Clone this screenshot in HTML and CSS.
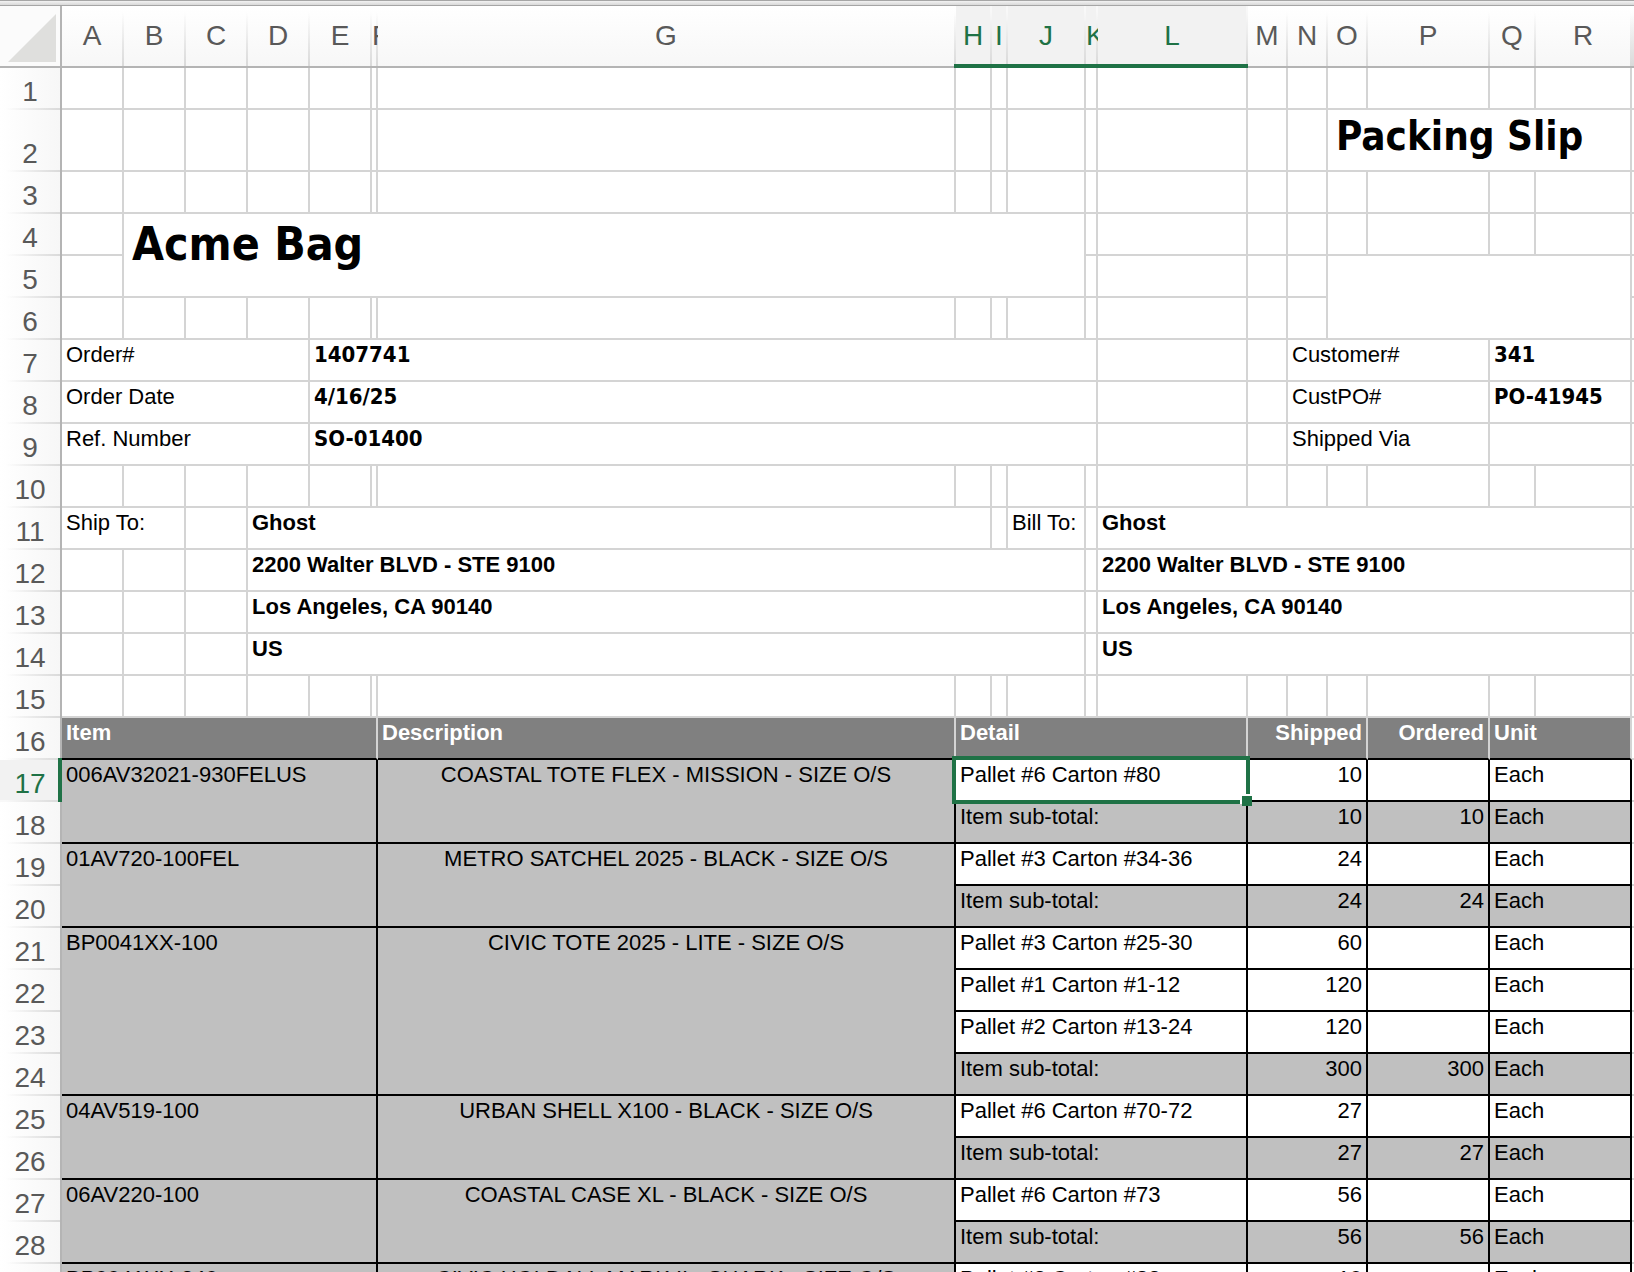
FILE: index.html
```html
<!DOCTYPE html>
<html lang="en">
<head>
    <meta charset="UTF-8">
    <meta name="viewport" content="width=device-width, initial-scale=1.0">
    <title>Packing Slip</title>
    <link rel="stylesheet" href="styles.css">
</head>
<body>
    <div class="sheet">
        <div class="top-edge"></div>
        <table>
            <colgroup>
                <col class="w-head">
                <col class="w-std" span="5">
                <col class="w-f">
                <col class="w-g">
                <col class="w-h">
                <col class="w-i">
                <col class="w-j">
                <col class="w-k">
                <col class="w-l">
                <col class="w-mno" span="3">
                <col class="w-p">
                <col class="w-q">
                <col class="w-r">
                <col class="w-s">
            </colgroup>
            <thead>
                <tr>
                    <th class="corner"><svg width="60" height="60" viewBox="0 0 60 60" aria-hidden="true"><path d="M56 8V56H8Z" fill="#dfdfdd"/></svg></th>
                    <th>A</th><th>B</th><th>C</th><th>D</th><th>E</th><th class="narrow">F</th><th class="before-active">G</th>
                    <th class="active">H</th><th class="active">I</th><th class="active">J</th><th class="active narrow">K</th><th class="active">L</th>
                    <th>M</th><th>N</th><th>O</th><th>P</th><th>Q</th><th>R</th><th></th>
                </tr>
            </thead>
            <tbody>
                <tr><th>1</th><td></td><td></td><td></td><td></td><td></td><td></td><td></td><td></td><td></td><td></td><td></td><td></td><td></td><td></td><td></td><td></td><td></td><td></td><td></td></tr>
                <tr class="tall"><th>2</th><td></td><td></td><td></td><td></td><td></td><td></td><td></td><td></td><td></td><td></td><td></td><td></td><td></td><td></td><td colspan="4" class="title">Packing Slip</td><td></td></tr>
                <tr><th>3</th><td></td><td></td><td></td><td></td><td></td><td></td><td></td><td></td><td></td><td></td><td></td><td></td><td></td><td></td><td></td><td></td><td></td><td></td><td></td></tr>
                <tr><th>4</th><td></td><td colspan="9" rowspan="2" class="company">Acme Bag</td><td></td><td></td><td></td><td></td><td></td><td></td><td></td><td></td><td></td></tr>
                <tr><th>5</th><td></td><td></td><td></td><td></td><td></td><td colspan="4" rowspan="2"></td><td></td></tr>
                <tr><th>6</th><td></td><td></td><td></td><td></td><td></td><td></td><td></td><td></td><td></td><td></td><td></td><td></td><td></td><td></td><td></td></tr>
                <tr><th>7</th><td colspan="4">Order#</td><td colspan="7" class="value">1407741</td><td></td><td></td><td colspan="3">Customer#</td><td colspan="2" class="value">341</td><td></td></tr>
                <tr><th>8</th><td colspan="4">Order Date</td><td colspan="7" class="value">4/16/25</td><td></td><td></td><td colspan="3">CustPO#</td><td colspan="2" class="value">PO-41945</td><td></td></tr>
                <tr><th>9</th><td colspan="4">Ref. Number</td><td colspan="7" class="value">SO-01400</td><td></td><td></td><td colspan="3">Shipped Via</td><td colspan="2" class="value"></td><td></td></tr>
                <tr><th>10</th><td></td><td></td><td></td><td></td><td></td><td></td><td></td><td></td><td></td><td></td><td></td><td></td><td></td><td></td><td></td><td></td><td></td><td></td><td></td></tr>
                <tr><th>11</th><td colspan="2">Ship To:</td><td></td><td colspan="5" class="address">Ghost</td><td></td><td>Bill To:</td><td></td><td colspan="7" class="address">Ghost</td><td></td></tr>
                <tr><th>12</th><td></td><td></td><td></td><td colspan="7" class="address">2200 Walter BLVD - STE 9100</td><td></td><td colspan="7" class="address">2200 Walter BLVD - STE 9100</td><td></td></tr>
                <tr><th>13</th><td></td><td></td><td></td><td colspan="7" class="address">Los Angeles, CA 90140</td><td></td><td colspan="7" class="address">Los Angeles, CA 90140</td><td></td></tr>
                <tr><th>14</th><td></td><td></td><td></td><td colspan="7" class="address">US</td><td></td><td colspan="7" class="address">US</td><td></td></tr>
                <tr><th>15</th><td></td><td></td><td></td><td></td><td></td><td></td><td></td><td></td><td></td><td></td><td></td><td></td><td></td><td></td><td></td><td></td><td></td><td></td><td></td></tr>
                <tr class="heading"><th>16</th><td colspan="6">Item</td><td>Description</td><td colspan="5">Detail</td><td colspan="3" class="num">Shipped</td><td class="num">Ordered</td><td colspan="2">Unit</td><td class="outside"></td></tr>

                <tr class="item"><th class="active">17</th><td colspan="6" rowspan="2" class="group">006AV32021-930FELUS</td><td rowspan="2" class="group desc">COASTAL TOTE FLEX - MISSION - SIZE O/S</td><td colspan="5" class="selected">Pallet #6 Carton #80<span class="selection"></span></td><td colspan="3" class="num">10</td><td></td><td colspan="2">Each</td><td class="outside"></td></tr>
                <tr class="item subtotal"><th>18</th><td colspan="5">Item sub-total:</td><td colspan="3" class="num">10</td><td class="num">10</td><td colspan="2">Each</td><td class="outside"></td></tr>

                <tr class="item"><th>19</th><td colspan="6" rowspan="2" class="group">01AV720-100FEL</td><td rowspan="2" class="group desc">METRO SATCHEL 2025 - BLACK - SIZE O/S</td><td colspan="5">Pallet #3 Carton #34-36</td><td colspan="3" class="num">24</td><td></td><td colspan="2">Each</td><td class="outside"></td></tr>
                <tr class="item subtotal"><th>20</th><td colspan="5">Item sub-total:</td><td colspan="3" class="num">24</td><td class="num">24</td><td colspan="2">Each</td><td class="outside"></td></tr>

                <tr class="item"><th>21</th><td colspan="6" rowspan="4" class="group">BP0041XX-100</td><td rowspan="4" class="group desc">CIVIC TOTE 2025 - LITE - SIZE O/S</td><td colspan="5">Pallet #3 Carton #25-30</td><td colspan="3" class="num">60</td><td></td><td colspan="2">Each</td><td class="outside"></td></tr>
                <tr class="item"><th>22</th><td colspan="5">Pallet #1 Carton #1-12</td><td colspan="3" class="num">120</td><td></td><td colspan="2">Each</td><td class="outside"></td></tr>
                <tr class="item"><th>23</th><td colspan="5">Pallet #2 Carton #13-24</td><td colspan="3" class="num">120</td><td></td><td colspan="2">Each</td><td class="outside"></td></tr>
                <tr class="item subtotal"><th>24</th><td colspan="5">Item sub-total:</td><td colspan="3" class="num">300</td><td class="num">300</td><td colspan="2">Each</td><td class="outside"></td></tr>

                <tr class="item"><th>25</th><td colspan="6" rowspan="2" class="group">04AV519-100</td><td rowspan="2" class="group desc">URBAN SHELL X100 - BLACK - SIZE O/S</td><td colspan="5">Pallet #6 Carton #70-72</td><td colspan="3" class="num">27</td><td></td><td colspan="2">Each</td><td class="outside"></td></tr>
                <tr class="item subtotal"><th>26</th><td colspan="5">Item sub-total:</td><td colspan="3" class="num">27</td><td class="num">27</td><td colspan="2">Each</td><td class="outside"></td></tr>

                <tr class="item"><th>27</th><td colspan="6" rowspan="2" class="group">06AV220-100</td><td rowspan="2" class="group desc">COASTAL CASE XL - BLACK - SIZE O/S</td><td colspan="5">Pallet #6 Carton #73</td><td colspan="3" class="num">56</td><td></td><td colspan="2">Each</td><td class="outside"></td></tr>
                <tr class="item subtotal"><th>28</th><td colspan="5">Item sub-total:</td><td colspan="3" class="num">56</td><td class="num">56</td><td colspan="2">Each</td><td class="outside"></td></tr>

                <tr class="item"><th>29</th><td colspan="6" class="group">BP0041XX-240</td><td class="group desc">CIVIC HOLDALL MARK II - SHARK - SIZE O/S</td><td colspan="5">Pallet #2 Carton #83</td><td colspan="3" class="num">10</td><td></td><td colspan="2">Each</td><td class="outside"></td></tr>
            </tbody>
        </table>
    </div>
</body>
</html>
```

FILE: styles.css
```css
* {
    box-sizing: border-box;
}
body {
    margin: 0;
    background-color: #fff;
    color: #000;
    font-family: "Liberation Sans", Arial, sans-serif;
}
.sheet {
    height: 100vh;
    overflow: hidden;
}
.top-edge {
    height: 6px;
    background: linear-gradient(to bottom, #f2f2f2, #d8d8d8);
    border-top: 1px solid #a6a6a6;
    border-bottom: 1px solid #a6a6a6;
}
table {
    width: 100%;
    table-layout: fixed;
    border-collapse: separate;
    border-spacing: 0;
}

/* column widths, G takes what is left */
.w-head, .w-std {
    width: 62px;
}
.w-f {
    width: 6px;
}
.w-h {
    width: 36px;
}
.w-i {
    width: 16px;
}
.w-j {
    width: 78px;
}
.w-k {
    width: 12px;
}
.w-l {
    width: 150px;
}
.w-mno {
    width: 40px;
}
.w-p {
    width: 122px;
}
.w-q {
    width: 46px;
}
.w-r {
    width: 96px;
}
.w-s {
    width: 2px;
}

/* row and column headers */
th {
    position: relative;
    padding: 0;
    color: #595959;
    font-size: 28px;
    font-weight: normal;
    line-height: 32px;
}
thead th {
    height: 62px;
    padding-right: 2px;
    border-bottom: 2px solid #b4b4b4;
    background: linear-gradient(to bottom, transparent 10%, #dadada) right / 2px 100% no-repeat,
        linear-gradient(to bottom, #fff, #f7f7f7);
}
thead th.corner {
    padding: 0;
    border-right: 2px solid #b4b4b4;
    background: #fbfbfb;
}
.corner svg {
    display: block;
}
thead .narrow {
    padding-right: 0;
    overflow: hidden;
    text-align: left;
}
thead th.active {
    border-bottom: 4px solid #1f7246;
    padding-top: 2px;
    background: linear-gradient(to bottom, #f8f8f8 10%, #dadada) right / 2px 100% no-repeat, #f2f2f2;
    color: #1f7246;
}
.before-active::after {
    content: "";
    position: absolute;
    right: 0;
    bottom: -2px;
    width: 2px;
    height: 4px;
    background-color: #1f7246;
}
tbody th {
    padding-bottom: 2px;
    border-right: 2px solid #b4b4b4;
    vertical-align: bottom;
    background: linear-gradient(to right, transparent 10%, #dadada) bottom / 100% 2px no-repeat,
        linear-gradient(to right, #fff, #f7f7f7);
}
tbody th.active {
    background: linear-gradient(to right, #f8f8f8 10%, #dadada) bottom / 100% 2px no-repeat, #f2f2f2;
    color: #1f7246;
}
tbody th.active::after {
    content: "";
    position: absolute;
    top: -2px;
    right: -2px;
    bottom: 0;
    width: 4px;
    background-color: #1f7246;
}

/* cells */
td {
    height: 42px;
    padding: 2px 0 0;
    border-right: 2px solid #d4d4d4;
    border-bottom: 2px solid #d4d4d4;
    font-size: 22px;
    line-height: 26px;
    vertical-align: top;
    white-space: nowrap;
}
td:not(:empty) {
    padding-left: 4px;
    padding-right: 4px;
}
td:last-child {
    border-right: 0;
}
.tall td {
    height: 62px;
}
td.title, td.company {
    padding: 2px 8px 0;
    font-family: "DejaVu Sans Condensed", Tahoma, sans-serif;
    font-weight: bold;
}
td.title {
    font-size: 40px;
    line-height: 48px;
}
td.company {
    font-size: 46px;
    line-height: 56px;
}
.value {
    font-family: "DejaVu Sans Condensed", Tahoma, sans-serif;
    font-weight: bold;
}
.address {
    font-weight: bold;
}
.num {
    text-align: right;
}

/* packing list */
.heading td {
    border-bottom-color: #000;
    background-color: #808080;
    color: #fff;
    font-weight: bold;
}
.item td {
    border-color: #000;
}
.item td.group, .subtotal td {
    background-color: #c0c0c0;
}
.item .desc {
    text-align: center;
}
tr td.outside, tr.subtotal td.outside {
    border-color: #d4d4d4;
    background-color: #fff;
}
.selected {
    position: relative;
}
.selection {
    position: absolute;
    inset: -4px;
    z-index: 1;
    border: 4px solid #1f7246;
}
.selection::after {
    content: "";
    position: absolute;
    right: -6px;
    bottom: -6px;
    width: 10px;
    height: 10px;
    background-color: #1f7246;
    box-shadow: -2px -2px 0 #fff;
}
```
